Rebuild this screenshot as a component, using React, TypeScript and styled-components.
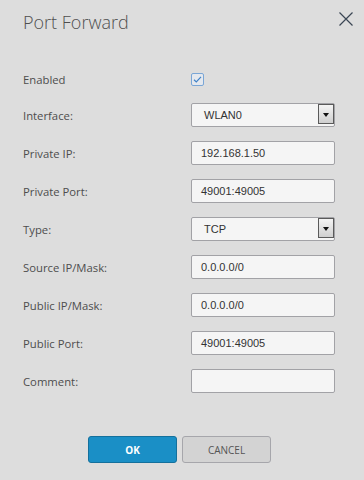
import React from "react";
import styled, { createGlobalStyle } from "styled-components";

const Global = createGlobalStyle`
  html, body { margin: 0; padding: 0; background: #dddddd; }
  body { font-family: "Open Sans", "DejaVu Sans", sans-serif; }
  * { box-sizing: border-box; }
`;

const Dialog = styled.div`
  width: 364px;
  height: 480px;
  background: #dddddd;
  display: flex;
  flex-direction: column;
`;

const Header = styled.div`
  display: flex;
  justify-content: space-between;
  align-items: flex-start;
  padding: 10px 11px 0 23px;
  height: 62px;
`;

const Title = styled.h1`
  margin: 0;
  font-family: "Open Sans", sans-serif;
  font-weight: 300;
  font-size: 18px;
  line-height: 24px;
  color: #4f4f4f;
`;

const Close = styled.button`
  width: 14px;
  height: 14px;
  margin-top: 2px;
  padding: 0;
  border: none;
  background: none;
  display: block;
  svg { display: block; }
`;

const Form = styled.div`
  display: flex;
  flex-direction: column;
  padding: 0 0 0 23px;
`;

const Row = styled.div<{ $h?: number }>`
  display: grid;
  grid-template-columns: 168px 144px;
  align-items: center;
  height: ${(p) => p.$h ?? 38}px;
`;

const Label = styled.label`
  font-family: "Open Sans", sans-serif;
  font-size: 11.3px;
  color: #4d4d4d;
`;

const Field = styled.div<{ $select?: boolean }>`
  height: 24px;
  border: 1px solid #a2a2a6;
  border-radius: 2px;
  background: #f5f5f5;
  display: flex;
  align-items: center;
  position: relative;
  font-family: "Liberation Sans", Arial, sans-serif;
  font-size: 11px;
  color: #333333;
  padding-left: ${(p) => (p.$select ? 12 : 9)}px;
`;

const Arrow = styled.div`
  position: absolute;
  right: 0;
  top: 0;
  width: 16px;
  height: 20px;
  border: 1px solid #5a5a5a;
  background: linear-gradient(#f4f4f4, #cfcfcf);
  display: flex;
  align-items: center;
  justify-content: center;
  &::after {
    content: "";
    width: 0;
    height: 0;
    border-left: 3.5px solid transparent;
    border-right: 3.5px solid transparent;
    border-top: 4px solid #111;
    margin-top: 2px;
  }
`;

const Check = styled.div`
  width: 13px;
  height: 13px;
  svg { display: block; }
`;

const Buttons = styled.div`
  display: flex;
  gap: 5px;
  padding-left: 88px;
  margin-top: 36px;
`;

const Button = styled.button<{ $primary?: boolean }>`
  width: 89px;
  height: 27px;
  border-radius: 3px;
  font-family: "Open Sans", sans-serif;
  font-size: 10px;
  padding: 0;
  cursor: pointer;
  border: 1px solid ${(p) => (p.$primary ? "#14709c" : "#a6a6ab")};
  background: ${(p) => (p.$primary ? "#1a8fc6" : "#d3d3d3")};
  color: ${(p) => (p.$primary ? "#ffffff" : "#555555")};
  font-weight: ${(p) => (p.$primary ? 700 : 400)};
`;

const rows: { label: string; value: string; select?: boolean }[] = [
  { label: "Interface:", value: "WLAN0", select: true },
  { label: "Private IP:", value: "192.168.1.50" },
  { label: "Private Port:", value: "49001:49005" },
  { label: "Type:", value: "TCP", select: true },
  { label: "Source IP/Mask:", value: "0.0.0.0/0" },
  { label: "Public IP/Mask:", value: "0.0.0.0/0" },
  { label: "Public Port:", value: "49001:49005" },
  { label: "Comment:", value: "" },
];

export default function App() {
  return (
    <Dialog>
      <Global />
      <Header>
        <Title>Port Forward</Title>
        <Close aria-label="Close">
          <svg width="14" height="14" viewBox="0 0 14 14">
            <path d="M0.5 0.5 L13.5 13.5 M13.5 0.5 L0.5 13.5" stroke="#3a4654" strokeWidth="1.2" fill="none" />
          </svg>
        </Close>
      </Header>
      <Form>
        <Row $h={34}>
          <Label>Enabled</Label>
          <Check>
            <svg width="13" height="13" viewBox="0 0 13 13">
              <rect x="0.5" y="0.5" width="12" height="12" rx="1.5" fill="#e4e8ee" stroke="#7aa6d6" strokeWidth="1" />
              <path d="M3 6.8 L5.3 9 L10 3.8" stroke="#3f82c8" strokeWidth="1.2" fill="none" />
            </svg>
          </Check>
        </Row>
        {rows.map((r) => (
          <Row key={r.label}>
            <Label>{r.label}</Label>
            <Field $select={r.select}>
              {r.value}
              {r.select && <Arrow />}
            </Field>
          </Row>
        ))}
      </Form>
      <Buttons>
        <Button $primary>OK</Button>
        <Button>CANCEL</Button>
      </Buttons>
    </Dialog>
  );
}
